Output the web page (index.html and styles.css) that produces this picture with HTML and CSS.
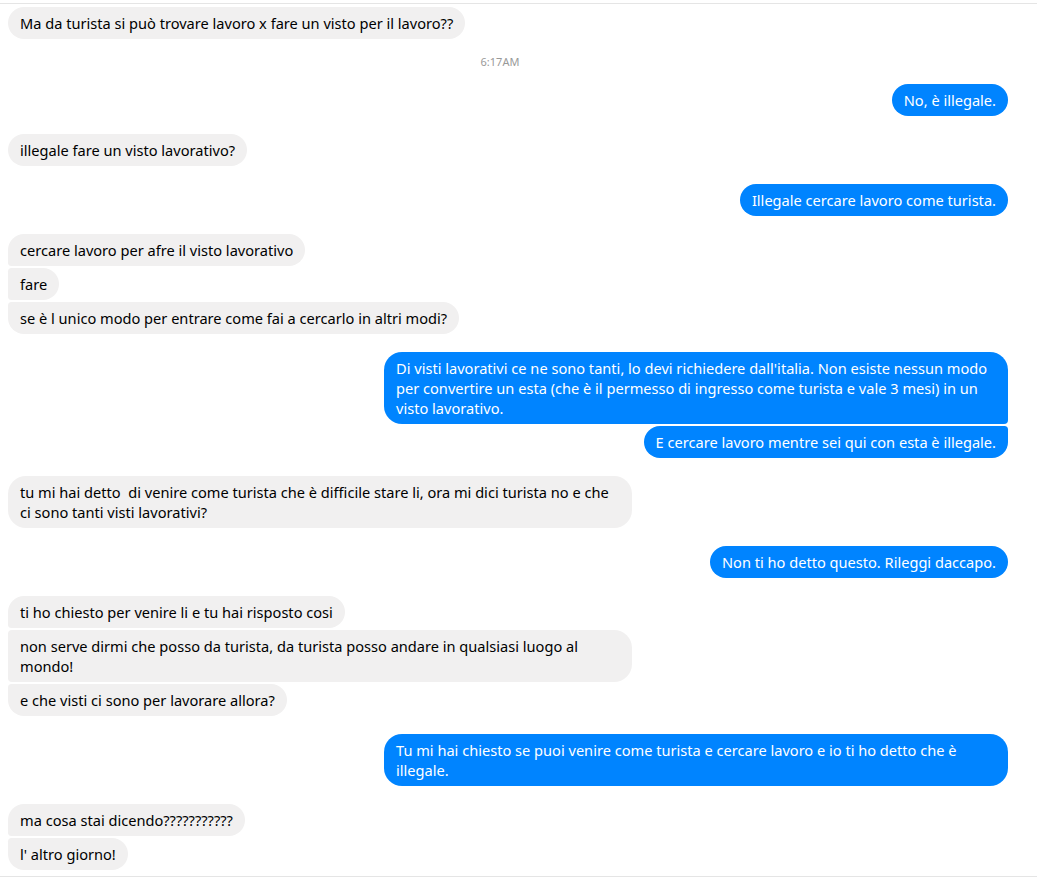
FILE: index.html
```html
<!DOCTYPE html>
<html lang="it">
<head>
<meta charset="utf-8">
<title>Messenger</title>
<link rel="stylesheet" href="styles.css">
</head>
<body>
<div class="thread">
  <div class="group in">
    <div class="msg">Ma da turista si può trovare lavoro x fare un visto per il lavoro??</div>
  </div>
  <div class="time">6:17AM</div>
  <div class="group out">
    <div class="msg">No, è illegale.</div>
  </div>
  <div class="group in">
    <div class="msg">illegale fare un visto lavorativo?</div>
  </div>
  <div class="group out">
    <div class="msg">Illegale cercare lavoro come turista.</div>
  </div>
  <div class="group in">
    <div class="msg">cercare lavoro per afre il visto lavorativo</div>
    <div class="msg">fare</div>
    <div class="msg">se è l unico modo per entrare come fai a cercarlo in altri modi?</div>
  </div>
  <div class="group out">
    <div class="msg">Di visti lavorativi ce ne sono tanti, lo devi richiedere dall'italia. Non esiste nessun modo per convertire un esta (che è il permesso di ingresso come turista e vale 3 mesi) in un visto lavorativo.</div>
    <div class="msg">E cercare lavoro mentre sei qui con esta è illegale.</div>
  </div>
  <div class="group in">
    <div class="msg">tu mi hai detto&nbsp; di venire come turista che è difficile stare li, ora mi dici turista no e che ci sono tanti visti lavorativi?</div>
  </div>
  <div class="group out">
    <div class="msg">Non ti ho detto questo. Rileggi daccapo.</div>
  </div>
  <div class="group in">
    <div class="msg">ti ho chiesto per venire li e tu hai risposto cosi</div>
    <div class="msg">non serve dirmi che posso da turista, da turista posso andare in qualsiasi luogo al mondo!</div>
    <div class="msg">e che visti ci sono per lavorare allora?</div>
  </div>
  <div class="group out">
    <div class="msg">Tu mi hai chiesto se puoi venire come turista e cercare lavoro e io ti ho detto che è illegale.</div>
  </div>
  <div class="group in">
    <div class="msg">ma cosa stai dicendo???????????</div>
    <div class="msg">l' altro giorno!</div>
  </div>
</div>
</body>
</html>
```

FILE: styles.css
```css
html, body {
  margin: 0;
  padding: 0;
  background: #fff;
}

body {
  font-family: "Noto Sans", "Open Sans", sans-serif;
  font-size: 14.6px;
  color: #000;
}

.thread {
  margin-top: 3px;
  border-top: 1px solid #e5e5e5;
  border-bottom: 1px solid #e5e5e5;
  padding: 3px 29px 6px 8px;
  display: flex;
  flex-direction: column;
  gap: 18px;
}

.group {
  display: flex;
  flex-direction: column;
  gap: 2px;
}

.group.in { align-items: flex-start; }
.group.out { align-items: flex-end; }

.msg {
  max-width: 600px;
  padding: 6px 12px;
  line-height: 20px;
  border-radius: 18px;
}

.in .msg {
  background: #f1f0f0;
  color: #000;
}

.out .msg {
  background: #0084ff;
  color: #fff;
}

.in .msg:not(:last-child) { border-bottom-left-radius: 4px; }
.in .msg:not(:first-child) { border-top-left-radius: 4px; }
.out .msg:not(:last-child) { border-bottom-right-radius: 4px; }
.out .msg:not(:first-child) { border-top-right-radius: 4px; }

.time {
  text-align: center;
  font-size: 11px;
  line-height: 16px;
  color: #999;
  margin: -3px 0 -4px;
  padding-right: 16px;
}
```
